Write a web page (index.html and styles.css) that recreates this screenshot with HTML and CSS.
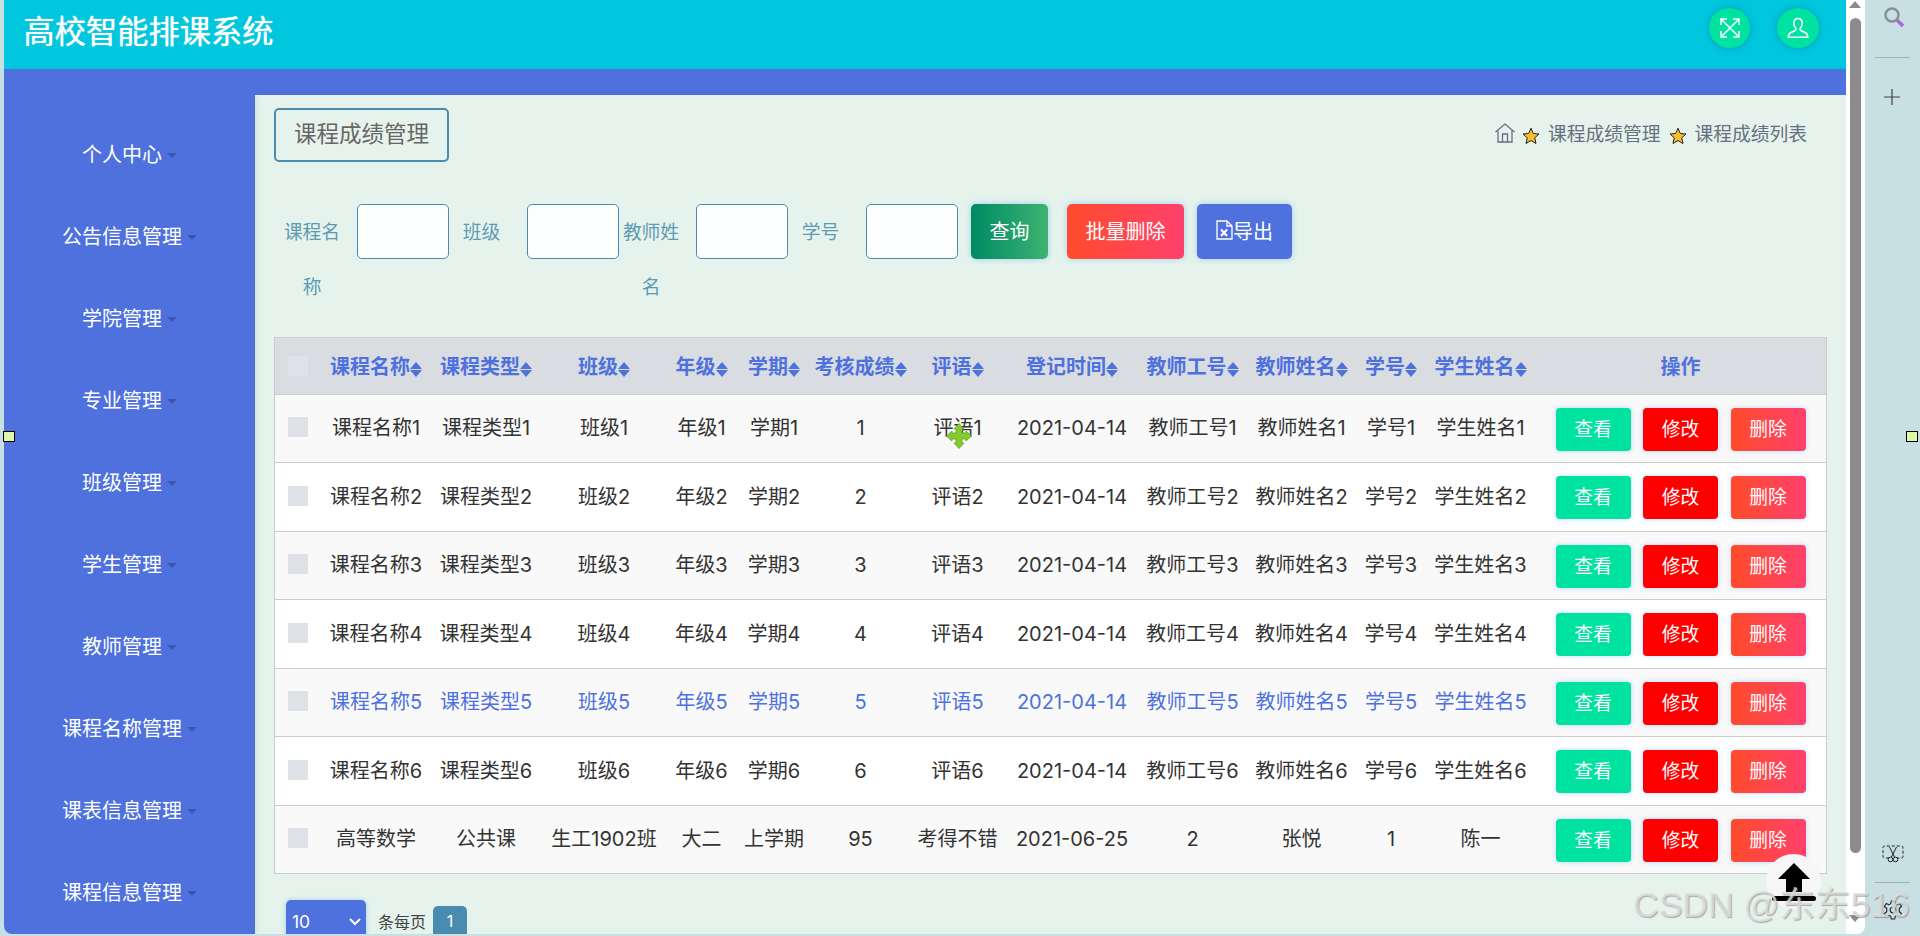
FILE: index.html
```html
<!DOCTYPE html>
<html lang="zh-CN">
<head>
<meta charset="utf-8">
<title>高校智能排课系统</title>
<link rel="stylesheet" href="styles.css">
</head>
<body>
<div class="shell">
  <div class="app">
    <header class="topbar">
      <h1 class="brand">高校智能排课系统</h1>
      <div class="top-actions">
        <span class="round-btn">
          <svg viewBox="0 0 20 20" width="20" height="20" fill="none" stroke="#fff" stroke-width="1.5"><path d="M1.5 1.5L18.500 18.500M18.500 1.500L1.500 18.500"/><path d="M1 7V1H7M13 1H19V7M19 13V19H13M7 19H1V13"/></svg>
        </span>
        <span class="round-btn">
          <svg viewBox="0 0 22 22" width="22" height="22" fill="none" stroke="#fff" stroke-width="1.5"><path d="M11 1.500C8.200 1.500 6.800 3.500 6.800 6.300C6.800 8.800 7.800 10.300 8.800 11.500C9.300 12.300 8.800 13.200 7.800 13.700L3.500 15.700C2 16.400 1.300 17.800 1.300 20.300H20.700C20.700 17.800 20 16.400 18.500 15.700L14.200 13.700C13.200 13.200 12.700 12.300 13.200 11.500C14.200 10.300 15.200 8.800 15.200 6.300C15.200 3.500 13.800 1.500 11 1.500Z"/></svg>
        </span>
      </div>
    </header>
    <div class="subbar"></div>
    <div class="layout">
      <nav class="sidebar">
        <a class="nav-item"><span class="nav-label">个人中心<i class="caret"></i></span></a>
        <a class="nav-item"><span class="nav-label">公告信息管理<i class="caret"></i></span></a>
        <a class="nav-item"><span class="nav-label">学院管理<i class="caret"></i></span></a>
        <a class="nav-item"><span class="nav-label">专业管理<i class="caret"></i></span></a>
        <a class="nav-item"><span class="nav-label">班级管理<i class="caret"></i></span></a>
        <a class="nav-item"><span class="nav-label">学生管理<i class="caret"></i></span></a>
        <a class="nav-item"><span class="nav-label">教师管理<i class="caret"></i></span></a>
        <a class="nav-item"><span class="nav-label">课程名称管理<i class="caret"></i></span></a>
        <a class="nav-item"><span class="nav-label">课表信息管理<i class="caret"></i></span></a>
        <a class="nav-item"><span class="nav-label">课程信息管理<i class="caret"></i></span></a>
      </nav>
      <main class="content">
        <div class="title-row">
          <div class="page-title">课程成绩管理</div>
          <div class="crumbs">
            <svg class="home" viewBox="0 0 20 20" width="20" height="20" fill="none" stroke="#666f80" stroke-width="1.300"><path d="M0.500 9L10 1L19.500 9"/><path d="M3 7.500V19H17V7.500"/><path d="M7.500 19V11H12.500V19"/></svg>
            <svg class="star" viewBox="0 0 18 18" width="18" height="18"><path d="M9 1.200L11.300 6.500L17 7L12.700 10.800L14 16.500L9 13.500L4 16.500L5.300 10.800L1 7L6.700 6.500Z" fill="#fbbf2c" stroke="#222" stroke-width="1"/></svg>
            <span>课程成绩管理</span>
            <svg class="star" viewBox="0 0 18 18" width="18" height="18"><path d="M9 1.200L11.300 6.500L17 7L12.700 10.800L14 16.500L9 13.500L4 16.500L5.300 10.800L1 7L6.700 6.500Z" fill="#fbbf2c" stroke="#222" stroke-width="1"/></svg>
            <span>课程成绩列表</span>
          </div>
        </div>
        <form class="search">
          <div class="field"><label class="field-label">课程名称</label><input class="field-input" type="text"></div>
          <div class="field"><label class="field-label">班级</label><input class="field-input" type="text"></div>
          <div class="field"><label class="field-label">教师姓名</label><input class="field-input" type="text"></div>
          <div class="field"><label class="field-label">学号</label><input class="field-input" type="text"></div>
          <button class="btn btn-query" type="button">查询</button>
          <button class="btn btn-batch" type="button">批量删除</button>
          <button class="btn btn-export" type="button"><svg viewBox="0 0 17 20" width="17" height="20" fill="none" stroke="#fff" stroke-width="1.300"><path d="M1 1H11L16 6V19H1Z"/><path d="M11 1V6H16"/><path d="M5 9.500L11 16M11 9.500L5 16" stroke-width="2"/></svg>导出</button>
        </form>
        <div class="table-wrap">
          <table class="grid">
            <colgroup>
              <col class="c-check"><col class="c-110"><col class="c-110"><col class="c-126"><col class="c-69"><col class="c-76"><col class="c-97"><col class="c-97"><col class="c-132"><col class="c-109"><col class="c-109"><col class="c-70"><col class="c-109"><col class="c-ops">
            </colgroup>
            <thead>
              <tr>
                <th><span class="check check-head"></span></th>
                <th>课程名称<i class="sort"></i></th><th>课程类型<i class="sort"></i></th><th>班级<i class="sort"></i></th><th>年级<i class="sort"></i></th><th>学期<i class="sort"></i></th><th>考核成绩<i class="sort"></i></th><th>评语<i class="sort"></i></th><th>登记时间<i class="sort"></i></th><th>教师工号<i class="sort"></i></th><th>教师姓名<i class="sort"></i></th><th>学号<i class="sort"></i></th><th>学生姓名<i class="sort"></i></th><th>操作</th>
              </tr>
            </thead>
            <tbody>
              <tr><td><span class="check"></span></td><td>课程名称1</td><td>课程类型1</td><td>班级1</td><td>年级1</td><td>学期1</td><td>1</td><td>评语1</td><td>2021-04-14</td><td>教师工号1</td><td>教师姓名1</td><td>学号1</td><td>学生姓名1</td><td><div class="ops"><button class="op op-view" type="button">查看</button><button class="op op-edit" type="button">修改</button><button class="op op-del" type="button">删除</button></div></td></tr>
              <tr><td><span class="check"></span></td><td>课程名称2</td><td>课程类型2</td><td>班级2</td><td>年级2</td><td>学期2</td><td>2</td><td>评语2</td><td>2021-04-14</td><td>教师工号2</td><td>教师姓名2</td><td>学号2</td><td>学生姓名2</td><td><div class="ops"><button class="op op-view" type="button">查看</button><button class="op op-edit" type="button">修改</button><button class="op op-del" type="button">删除</button></div></td></tr>
              <tr><td><span class="check"></span></td><td>课程名称3</td><td>课程类型3</td><td>班级3</td><td>年级3</td><td>学期3</td><td>3</td><td>评语3</td><td>2021-04-14</td><td>教师工号3</td><td>教师姓名3</td><td>学号3</td><td>学生姓名3</td><td><div class="ops"><button class="op op-view" type="button">查看</button><button class="op op-edit" type="button">修改</button><button class="op op-del" type="button">删除</button></div></td></tr>
              <tr><td><span class="check"></span></td><td>课程名称4</td><td>课程类型4</td><td>班级4</td><td>年级4</td><td>学期4</td><td>4</td><td>评语4</td><td>2021-04-14</td><td>教师工号4</td><td>教师姓名4</td><td>学号4</td><td>学生姓名4</td><td><div class="ops"><button class="op op-view" type="button">查看</button><button class="op op-edit" type="button">修改</button><button class="op op-del" type="button">删除</button></div></td></tr>
              <tr class="row-hover"><td><span class="check"></span></td><td>课程名称5</td><td>课程类型5</td><td>班级5</td><td>年级5</td><td>学期5</td><td>5</td><td>评语5</td><td>2021-04-14</td><td>教师工号5</td><td>教师姓名5</td><td>学号5</td><td>学生姓名5</td><td><div class="ops"><button class="op op-view" type="button">查看</button><button class="op op-edit" type="button">修改</button><button class="op op-del" type="button">删除</button></div></td></tr>
              <tr><td><span class="check"></span></td><td>课程名称6</td><td>课程类型6</td><td>班级6</td><td>年级6</td><td>学期6</td><td>6</td><td>评语6</td><td>2021-04-14</td><td>教师工号6</td><td>教师姓名6</td><td>学号6</td><td>学生姓名6</td><td><div class="ops"><button class="op op-view" type="button">查看</button><button class="op op-edit" type="button">修改</button><button class="op op-del" type="button">删除</button></div></td></tr>
              <tr><td><span class="check"></span></td><td>高等数学</td><td>公共课</td><td>生工1902班</td><td>大二</td><td>上学期</td><td>95</td><td>考得不错</td><td>2021-06-25</td><td>2</td><td>张悦</td><td>1</td><td>陈一</td><td><div class="ops"><button class="op op-view" type="button">查看</button><button class="op op-edit" type="button">修改</button><button class="op op-del" type="button">删除</button></div></td></tr>
            </tbody>
          </table>
        </div>
        <div class="pager">
          <div class="page-size"><span>10</span><svg viewBox="0 0 12 8" width="12" height="8" fill="none" stroke="#fff" stroke-width="2"><path d="M1 1L6 6L11 1"/></svg></div>
          <span class="page-note">条每页</span>
          <span class="page-num">1</span>
        </div>
      </main>
    </div>
  </div>
  <div class="scrollbar">
    <i class="arrow-up"></i>
    <div class="thumb"></div>
    <i class="arrow-down"></i>
  </div>
  <aside class="tools">
    <div class="tools-group">
      <svg class="tool-search" viewBox="0 0 22 22" width="22" height="22" fill="none"><circle cx="9" cy="9" r="6.500" stroke="#8a8f90" stroke-width="2.500"/><path d="M14 14L20 20" stroke="#a66bd6" stroke-width="3.500"/></svg>
      <div class="tool-rule"></div>
      <svg class="tool-plus" viewBox="0 0 16 16" width="16" height="16" stroke="#444" stroke-width="1.200"><path d="M0 8H16M8 0V16"/></svg>
    </div>
    <div class="tools-group">
      <svg class="tool-cut" viewBox="0 0 22 18" width="22" height="18" fill="none" stroke="#222" stroke-width="1"><path d="M7 13H2.500Q1 13 1 11.500V2.500Q1 1 2.500 1H19.500Q21 1 21 2.500V11.500Q21 13 19.500 13H15" stroke-dasharray="3 2"/><path d="M7.500 2L12.500 12M14.500 2L9.500 12"/><circle cx="8.500" cy="14.500" r="2.300"/><circle cx="13.500" cy="14.500" r="2.300"/></svg>
      <div class="tool-rule"></div>
      <svg class="tool-gear" viewBox="0 0 20 20" width="20" height="20" fill="none" stroke="#222" stroke-width="1.100"><circle cx="10" cy="10" r="2.800"/><path d="M8.300 1H11.700L12.200 3.700L14.200 4.700L16.700 3.500L18.500 6.500L16.300 8.200V11.800L18.500 13.500L16.700 16.500L14.200 15.300L12.200 16.300L11.700 19H8.300L7.800 16.300L5.800 15.300L3.300 16.500L1.500 13.500L3.700 11.800V8.200L1.500 6.500L3.300 3.500L5.800 4.700L7.800 3.700Z"/></svg>
    </div>
  </aside>
</div>
<svg class="cursor" viewBox="0 0 26 26" width="26" height="26"><path d="M13 0.500L18 6H16V10H20V8L25.500 13L20 18V16H16V20H18L13 25.500L8 20H10V16H6V18L0.500 13L6 8V10H10V6H8Z" fill="#84cc2e" stroke="#5f9e1f" stroke-width="0.800"/></svg>
<span class="handle handle-left"></span>
<span class="handle handle-right"></span>
<div class="to-top">
  <svg viewBox="0 0 44 40" width="44" height="40"><path d="M22 1L38 17H30V30H14V17H6Z" fill="#000"/><rect x="0" y="34" width="44" height="5" rx="2.500" fill="#000"/></svg>
</div>
<div class="watermark">CSDN @东东516</div>
</body>
</html>
```
FILE: styles.css
```css
* { box-sizing: border-box; }
html, body { margin: 0; height: 936px; overflow: hidden; }
body {
  background: #c8dfe3;
  font-family: Inter, "Noto Sans CJK SC", "Noto Sans", sans-serif;
  color: #333;
  font-size: 20px;
}
.shell { display: flex; height: 934px; padding-left: 4px; }
.app {
  width: 1842px;
  height: 934px;
  display: flex;
  flex-direction: column;
  overflow: hidden;
  border-bottom-left-radius: 8px;
}
.topbar {
  flex: none;
  height: 69px;
  background: #00c6de;
  display: flex;
  align-items: center;
  justify-content: space-between;
  padding: 0 27px 0 19.500px;
}
.brand {
  margin: 0;
  font-size: 31.25px;
  font-weight: 400;
  color: #fff;
  line-height: 60px;
  margin-top: -6px;
  text-shadow: 0 0 1px #fff;
}
.top-actions { display: flex; gap: 27px; margin-top: -13px; }
.round-btn {
  width: 41px;
  height: 40px;
  border-radius: 50%;
  background: #00e29f;
  box-shadow: 0 0 6px rgba(0, 110, 130, .45);
  display: flex;
  align-items: center;
  justify-content: center;
}
.round-btn:last-child { width: 42px; }
.subbar { flex: none; height: 26px; background: #4e71de; }
.layout { flex: 1; display: flex; min-height: 0; }
.sidebar {
  flex: none;
  width: 251px;
  background: #4e71de;
  padding-top: 18px;
  box-shadow: 2px 0 5px rgba(60, 100, 140, .12);
  z-index: 1;
}
.nav-item {
  height: 82px;
  display: flex;
  align-items: center;
  justify-content: center;
  padding-top: 2px;
  color: #fff;
  font-size: 20px;
  line-height: 26px;
}
.nav-label { display: inline-flex; align-items: center; }
.caret {
  width: 0;
  height: 0;
  margin: 0 0 0 5px;
  border-left: 5px solid transparent;
  border-right: 5px solid transparent;
  border-top: 5px solid #3d56ad;
}
.content { flex: 1; background: #e6f3ec; padding: 13px 19px 0 19px; min-width: 0; }
.title-row { display: flex; align-items: center; justify-content: space-between; height: 54px; }
.page-title {
  width: 175px;
  height: 54px;
  border: 2px solid #4a8bb0;
  border-radius: 5px;
  color: #666;
  font-size: 22.5px;
  line-height: 48px;
  text-align: center;
}
.crumbs {
  display: flex;
  align-items: center;
  color: #667080;
  font-size: 18.75px;
  line-height: 26px;
  padding-right: 20px;
}
.crumbs span { display: block; }
.home { margin: -5px 7px 0 0; }
.star { margin: 2px 8px 0 0; }
.crumbs span + .star { margin-left: 8px; }
.search { display: flex; align-items: flex-start; height: 110px; margin-top: 42px; padding-left: 7px; }
.field { display: flex; align-items: flex-start; margin-right: 1.500px; }
.field-label {
  width: 62px;
  margin-right: 14px;
  padding-top: 1px;
  font-size: 18.75px;
  line-height: 55px;
  text-align: center;
  color: #5f9ab5;
}
.field-input {
  width: 92px;
  height: 55px;
  border: 1px solid #4a8bb0;
  border-radius: 5px;
  background: #fdfefe;
  padding: 0;
}
.btn {
  height: 55px;
  border: 0;
  border-radius: 5px;
  color: #fff;
  font: inherit;
  font-size: 20px;
  padding: 0 0 3px;
  box-shadow: 0 0 6px rgba(80, 160, 255, .45);
  display: inline-flex;
  align-items: center;
  justify-content: center;
}
.btn-query { width: 77px; margin-left: 12px; background: linear-gradient(90deg, #008a63, #3cb371); }
.btn-batch { width: 117px; margin-left: 19px; background: linear-gradient(90deg, #ff4b2b, #ff416c); }
.btn-export { width: 95px; margin-left: 13px; background: #4e71de; }
.table-wrap { margin-top: 23px; width: 1553px; border: 1px solid #ccc; border-bottom: 0; }
.grid { width: 1551px; border-collapse: collapse; table-layout: fixed; }
.c-check { width: 46px; }
.c-110 { width: 110px; }
.c-126 { width: 126px; }
.c-69 { width: 69px; }
.c-76 { width: 76px; }
.c-97 { width: 97px; }
.c-132 { width: 132px; }
.c-109 { width: 109px; }
.c-70 { width: 70px; }
.c-ops { width: 291px; }
.grid th, .grid td { padding: 0; text-align: center; white-space: nowrap; border-bottom: 1px solid #ccc; }
.grid th {
  height: 56px;
  background: #d9dde2;
  color: #4e71de;
  font-size: 20px;
  font-weight: 700;
  line-height: 26px;
  padding-top: 2px;
}
.grid td { height: 68.5px; font-size: 20px; line-height: 26px; }
.grid tbody tr:nth-child(odd) { background: #f9f9f9; }
.grid tbody tr:nth-child(even) { background: #fff; }
.row-hover td { color: #4e71de; }
.check { display: block; width: 20px; height: 20px; margin: 0 0 0 13px; background: #dee1e6; position: relative; top: -1px; }
.check-head { background: #dfe2e6; }
.sort {
  display: inline-flex;
  flex-direction: column;
  gap: 1px;
  width: 12px;
  vertical-align: 5px;
}
.sort::before, .sort::after {
  content: "";
  width: 0;
  height: 0;
  border-left: 6px solid transparent;
  border-right: 6px solid transparent;
}
.sort::before { border-bottom: 7px solid #4e71de; }
.sort::after { border-top: 7px solid #4e71de; }
.ops { display: flex; justify-content: center; gap: 12.500px; margin-top: 2px; }
.op {
  width: 75px;
  height: 43px;
  border: 0;
  border-radius: 4px;
  padding: 1px 0 0;
  color: #fff;
  font: inherit;
  font-size: 18.75px;
  box-shadow: 0 0 5px rgba(80, 160, 255, .4);
}
.op-view { background: #00e29f; }
.op-edit { background: #ff0000; }
.op-del { background: linear-gradient(90deg, #ff4b2b, #ff416c); }
.pager { display: flex; align-items: flex-start; margin-top: 26px; padding-left: 12px; }
.page-size {
  width: 80px;
  height: 50px;
  background: #4e71de;
  border-radius: 5px;
  box-shadow: 0 0 5px rgba(80, 160, 255, .45);
  color: #fff;
  font-size: 17.5px;
  line-height: 24px;
  display: flex;
  justify-content: space-between;
  padding: 10px 5px 0 6px;
}
.page-size svg { margin-top: 8px; }
.page-note { margin: 10px 0 0 12px; font-size: 16px; line-height: 24px; color: #444; }
.page-num {
  margin: 6px 0 0 7px;
  width: 34px;
  height: 32px;
  border-radius: 5px;
  background: #4a8bb0;
  color: #fff;
  font-size: 16px;
  line-height: 30px;
  text-align: center;
}
.scrollbar {
  width: 19px;
  height: 934px;
  background: #fff;
  border-bottom-right-radius: 8px;
  padding: 18px 4px 0;
  position: relative;
}
.thumb { width: 11px; height: 835px; background: #8b8b8b; border-radius: 6px; }
.arrow-up, .arrow-down {
  position: absolute;
  left: 3px;
  width: 0;
  height: 0;
  border-left: 6.500px solid transparent;
  border-right: 6.500px solid transparent;
}
.arrow-up { top: 1px; border-bottom: 7px solid #8b8b8b; }
.arrow-down { top: 915px; border-top: 7px solid #8b8b8b; }
.tools {
  width: 55px;
  height: 934px;
  display: flex;
  flex-direction: column;
  justify-content: space-between;
  padding: 6px 0 14px;
}
.tools-group { display: flex; flex-direction: column; align-items: center; }
.tool-rule { width: 35px; height: 1px; background: #9db0b4; margin: 29px 0 31px; }
.tools-group:last-child .tool-rule { margin: 19px 0 17px; }
.tool-search { margin-left: 2px; }
.tool-plus { margin-left: -1px; }
.cursor { position: absolute; left: 946px; top: 423px; z-index: 5; }
.handle {
  position: absolute;
  top: 431px;
  width: 12px;
  height: 11px;
  background: #dff7a8;
  border: 1px solid #000;
  z-index: 5;
}
.handle-left { left: 3px; }
.handle-right { left: 1906px; }
.to-top {
  position: absolute;
  left: 1766px;
  top: 854px;
  width: 55px;
  height: 55px;
  border-radius: 50%;
  background: #f6f6f6;
  display: flex;
  align-items: center;
  justify-content: center;
  z-index: 5;
}
.watermark {
  position: absolute;
  left: 1633px;
  top: 882px;
  font-family: "Liberation Sans", "Noto Sans CJK SC", sans-serif;
  font-size: 35.500px;
  line-height: 46px;
  white-space: nowrap;
  color: rgba(225, 225, 225, .8);
  text-shadow: 1px 1px 1px rgba(120, 120, 120, .6);
  z-index: 6;
}
```
